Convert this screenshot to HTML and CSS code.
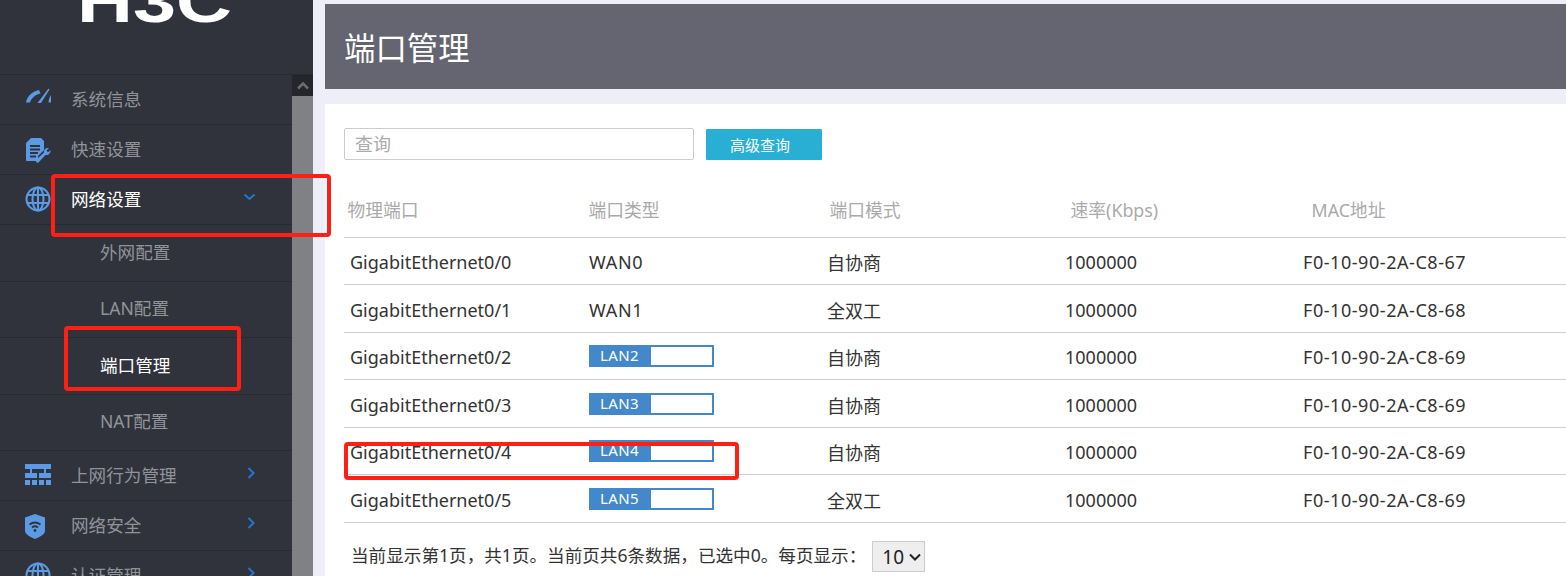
FILE: index.html
```html
<!DOCTYPE html>
<html lang="zh-CN">
<head>
<meta charset="utf-8">
<title>端口管理</title>
<link rel="stylesheet" href="styles.css">
</head>
<body>
<div class="page">
  <aside class="sidebar">
    <div class="logo"><span class="logo-text">H3C</span></div>
    <div class="menu-wrap">
      <nav class="menu">
        <a class="item">
          <svg class="icon" viewBox="0 0 26 26"><path d="M1 15.5 C2 9.5 7 4.5 14 3 L15.5 6.5 C10.5 7.5 6.5 11 5 15.5 Z"/><path d="M12.5 16 L23.5 1.5 L24.5 2.5 L16 16 Z"/><path d="M26 8 L26 15.5 L23.5 15.5 C23.5 13 24.5 10 26 8 Z"/></svg>
          <span class="label">系统信息</span>
        </a>
        <a class="item">
          <svg class="icon" viewBox="0 0 26 26"><path d="M6 1 H16 L19 4 V13 L13 19 V24 H2 Q1 24 1 23 V6 Z M5 8 V10 H15 V8 Z M5 11.5 V13.5 H15 V11.5 Z M5 15 V17 H13 V15 Z M5 18.5 V20.5 H11 V18.5 Z" fill-rule="evenodd"/><path d="M11 23 L19 15.5 C18.5 12.5 21 10.5 24 11 L21.5 13.5 L23 15.5 L25.5 13 C26 16 23.5 18.5 20.5 18 L13.5 25.5 Q12 26 11 25 Z"/></svg>
          <span class="label">快速设置</span>
        </a>
        <a class="item">
          <svg class="icon icon-globe" viewBox="0 0 26 26"><g class="line"><circle cx="13" cy="13" r="11.5"/><ellipse cx="13" cy="13" rx="5.5" ry="11.5"/><path d="M13 1.5 V24.5 M2 9 H24 M2 17 H24"/></g></svg>
          <span class="label active">网络设置</span>
          <svg class="chev-down" viewBox="0 0 12 8"><path d="M1 1.5 L6 6 L11 1.5"/></svg>
        </a>
        <a class="item sub">外网配置</a>
        <a class="item sub">LAN配置</a>
        <a class="item sub active">端口管理</a>
        <a class="item sub">NAT配置</a>
        <a class="item">
          <svg class="icon icon-org" viewBox="0 0 26 22"><path d="M0 0 H26 V5 H0 Z M0 9 H12 V14 H0 Z M14 9 H26 V14 H14 Z M0 16 H5 V21 H0 Z M7 16 H12 V21 H7 Z M14 16 H19 V21 H14 Z M21 16 H26 V21 H21 Z"/><path d="M5 5 H7 V9 H5 Z M19 5 H21 V9 H19 Z"/></svg>
          <span class="label">上网行为管理</span>
          <svg class="chev-right" viewBox="0 0 8 12"><path d="M1.5 1 L6.5 6 L1.5 11"/></svg>
        </a>
        <a class="item">
          <svg class="icon icon-shield" viewBox="0 0 26 26"><path d="M0 3.5 L10 0 L20 3.5 V17 Q20 21 10 25 Q0 21 0 17 Z"/><g class="wifi"><path d="M4.5 10.5 Q10 6.5 15.5 10.5"/><path d="M7 13.5 Q10 11 13 13.5"/><circle class="dot" cx="10" cy="16.5" r="1.4"/></g></svg>
          <span class="label">网络安全</span>
          <svg class="chev-right" viewBox="0 0 8 12"><path d="M1.5 1 L6.5 6 L1.5 11"/></svg>
        </a>
        <a class="item">
          <svg class="icon icon-globe" viewBox="0 0 26 26"><g class="line"><circle cx="13" cy="13" r="11.5"/><ellipse cx="13" cy="13" rx="5.5" ry="11.5"/><path d="M13 1.5 V24.5 M2 9 H24 M2 17 H24"/></g></svg>
          <span class="label">认证管理</span>
          <svg class="chev-right" viewBox="0 0 8 12"><path d="M1.5 1 L6.5 6 L1.5 11"/></svg>
        </a>
      </nav>
      <div class="scrollbar">
        <div class="scroll-up"><svg viewBox="0 0 12 8"><path d="M1 6.5 L6 1.5 L11 6.5"/></svg></div>
      </div>
    </div>
  </aside>
  <main class="main">
    <header class="title-bar"><h1>端口管理</h1></header>
    <section class="panel">
      <div class="search-row">
        <div class="search-input">查询</div>
        <button class="search-btn" type="button">高级查询</button>
      </div>
      <table class="head-table">
        <tr><th>物理端口</th><th>端口类型</th><th>端口模式</th><th>速率(Kbps)</th><th>MAC地址</th></tr>
      </table>
      <table class="body-table">
        <colgroup><col class="c1"><col class="c2"><col class="c2"><col class="c2"><col></colgroup>
        <tr><td>GigabitEthernet0/0</td><td class="wide">WAN0</td><td>自协商</td><td>1000000</td><td class="mac">F0-10-90-2A-C8-67</td></tr>
        <tr><td>GigabitEthernet0/1</td><td class="wide">WAN1</td><td>全双工</td><td>1000000</td><td class="mac">F0-10-90-2A-C8-68</td></tr>
        <tr><td>GigabitEthernet0/2</td><td><span class="lan"><span class="lan-name">LAN2</span></span></td><td>自协商</td><td>1000000</td><td class="mac">F0-10-90-2A-C8-69</td></tr>
        <tr><td>GigabitEthernet0/3</td><td><span class="lan"><span class="lan-name">LAN3</span></span></td><td>自协商</td><td>1000000</td><td class="mac">F0-10-90-2A-C8-69</td></tr>
        <tr><td>GigabitEthernet0/4</td><td><span class="lan"><span class="lan-name">LAN4</span></span></td><td>自协商</td><td>1000000</td><td class="mac">F0-10-90-2A-C8-69</td></tr>
        <tr><td>GigabitEthernet0/5</td><td><span class="lan"><span class="lan-name">LAN5</span></span></td><td>全双工</td><td>1000000</td><td class="mac">F0-10-90-2A-C8-69</td></tr>
      </table>
      <div class="pager">
        <span class="pager-text">当前显示第1页，共1页。当前页共6条数据，已选中0。每页显示：</span>
        <span class="page-size">10<svg viewBox="0 0 12 8"><path d="M1 1.5 L6 6.5 L11 1.5"/></svg></span>
      </div>
    </section>
  </main>
  <div class="mark mark-menu"></div>
  <div class="mark mark-sub"></div>
  <div class="mark mark-row"></div>
</div>
</body>
</html>
```

FILE: styles.css
```css
* { box-sizing: border-box; }
html, body { margin: 0; height: 100%; overflow: hidden; }
body { font-family: "Noto Sans", "Noto Sans CJK SC", sans-serif; color: #333; }
.page { position: relative; display: flex; width: 1566px; height: 576px; overflow: hidden; background: #eeeef8; }

.sidebar { flex: 0 0 313px; display: flex; flex-direction: column; background: #30333c; }
.logo { height: 75px; flex: none; overflow: hidden; border-bottom: 1px solid #282a32; padding-left: 77px; }
.logo-text { display: block; margin-top: -28px; font: 700 60px/60px "Liberation Sans", sans-serif; color: #fff; transform: scaleX(1.29); transform-origin: left top; }
.menu-wrap { flex: 1; display: flex; min-height: 0; }
.menu { flex: 0 0 292px; }
.item { display: flex; align-items: center; height: 50px; padding-bottom: 3px; border-bottom: 1px solid #282a32; position: relative; font-size: 17.6px; color: #90939a; }
.icon { position: absolute; left: 25px; top: 12px; width: 26px; height: 26px; fill: #5b9be6; }
.icon-globe { top: 11px; }
.icon-org { top: 13px; height: 22px; }
.icon-shield { top: 13px; }
.icon .line { fill: none; stroke: #5b9be6; stroke-width: 2; }
.icon .wifi path { fill: none; stroke: #30333c; stroke-width: 1.8; }
.icon .wifi .dot { fill: #30333c; }
.label { margin-left: 71px; }
.label.active { color: #fff; }
.sub { height: 56.5px; padding-left: 100px; }
.sub.active { color: #fff; }
.chev-down { position: absolute; left: 243px; top: 18px; width: 13px; height: 8px; fill: none; stroke: #2277cc; stroke-width: 2; }
.chev-right { position: absolute; left: 247px; top: 16px; width: 8px; height: 12px; fill: none; stroke: #2277cc; stroke-width: 2; }
.scrollbar { flex: 0 0 21px; background: #808184; }
.scroll-up { height: 21px; background: #24262b; display: flex; align-items: center; justify-content: center; }
.scroll-up svg { width: 12px; height: 8px; fill: none; stroke: #6a6c70; stroke-width: 2.5; }

.main { flex: 1; min-width: 0; padding: 4px 0 0 12px; display: flex; flex-direction: column; gap: 15px; }
.title-bar { height: 85px; flex: none; background: #646570; display: flex; align-items: center; padding: 2px 0 0 19px; }
.title-bar h1 { margin: 0; font-size: 31.4px; font-weight: 400; color: #fff; line-height: 1; }
.panel { flex: 1; background: #fff; padding: 24px 0 0 19px; }

.search-row { display: flex; align-items: center; gap: 12px; height: 32px; }
.search-input { width: 350px; height: 32px; border: 1px solid #ccc; border-radius: 2px; padding-left: 10px; font-size: 18px; line-height: 30px; color: #aaa; }
.search-btn { width: 116px; height: 31px; border: 0; border-radius: 1px; background: #29aed4; color: #fff; font: inherit; font-size: 15px; padding: 0 8px 0 0; }

.head-table, .body-table { border-collapse: collapse; table-layout: fixed; width: 1222px; }
.head-table { margin-top: 23px; }
.head-table th { width: 241px; height: 54px; padding: 0 0 2px 3.5px; text-align: left; font-weight: 400; font-size: 17.8px; color: #aaa; border-bottom: 1px solid #ccc; }
.head-table th:last-child { width: auto; }
.c1 { width: 239px; }
.c2 { width: 238px; }
.body-table td { height: 48px; padding: 2px 0 0 6px; font-size: 18px; border-bottom: 1px solid #ccc; white-space: nowrap; }
.body-table tr:nth-child(odd) td { height: 47px; }
.wide { letter-spacing: 0.7px; }
.mac { letter-spacing: 0.55px; }
.lan { display: block; width: 125px; height: 22px; margin-top: -2px; border: 2px solid #4488cc; background: #fff; }
.lan-name { display: block; width: 60px; height: 100%; background: #4488cc; color: #fff; font-size: 15px; line-height: 16px; padding-left: 9px; letter-spacing: 0.4px; }

.pager { display: flex; align-items: center; height: 31px; margin-top: 18px; padding-left: 7px; font-size: 17.6px; gap: 6px; }
.pager-text { padding-bottom: 4px; }
.page-size { display: flex; align-items: center; gap: 5px; width: 53px; height: 31px; padding-left: 9px; background: #eee; border: 1px solid #ccc; font-size: 19px; color: #222; }
.page-size svg { width: 12px; height: 8px; fill: none; stroke: #222; stroke-width: 2; }

.mark { position: absolute; border: 4px solid #ff2015; border-radius: 4px; pointer-events: none; }
.mark-menu { left: 51px; top: 174px; width: 280px; height: 63px; }
.mark-sub { left: 64px; top: 326px; width: 177px; height: 65px; }
.mark-row { left: 344px; top: 442px; width: 395px; height: 38px; }
```
